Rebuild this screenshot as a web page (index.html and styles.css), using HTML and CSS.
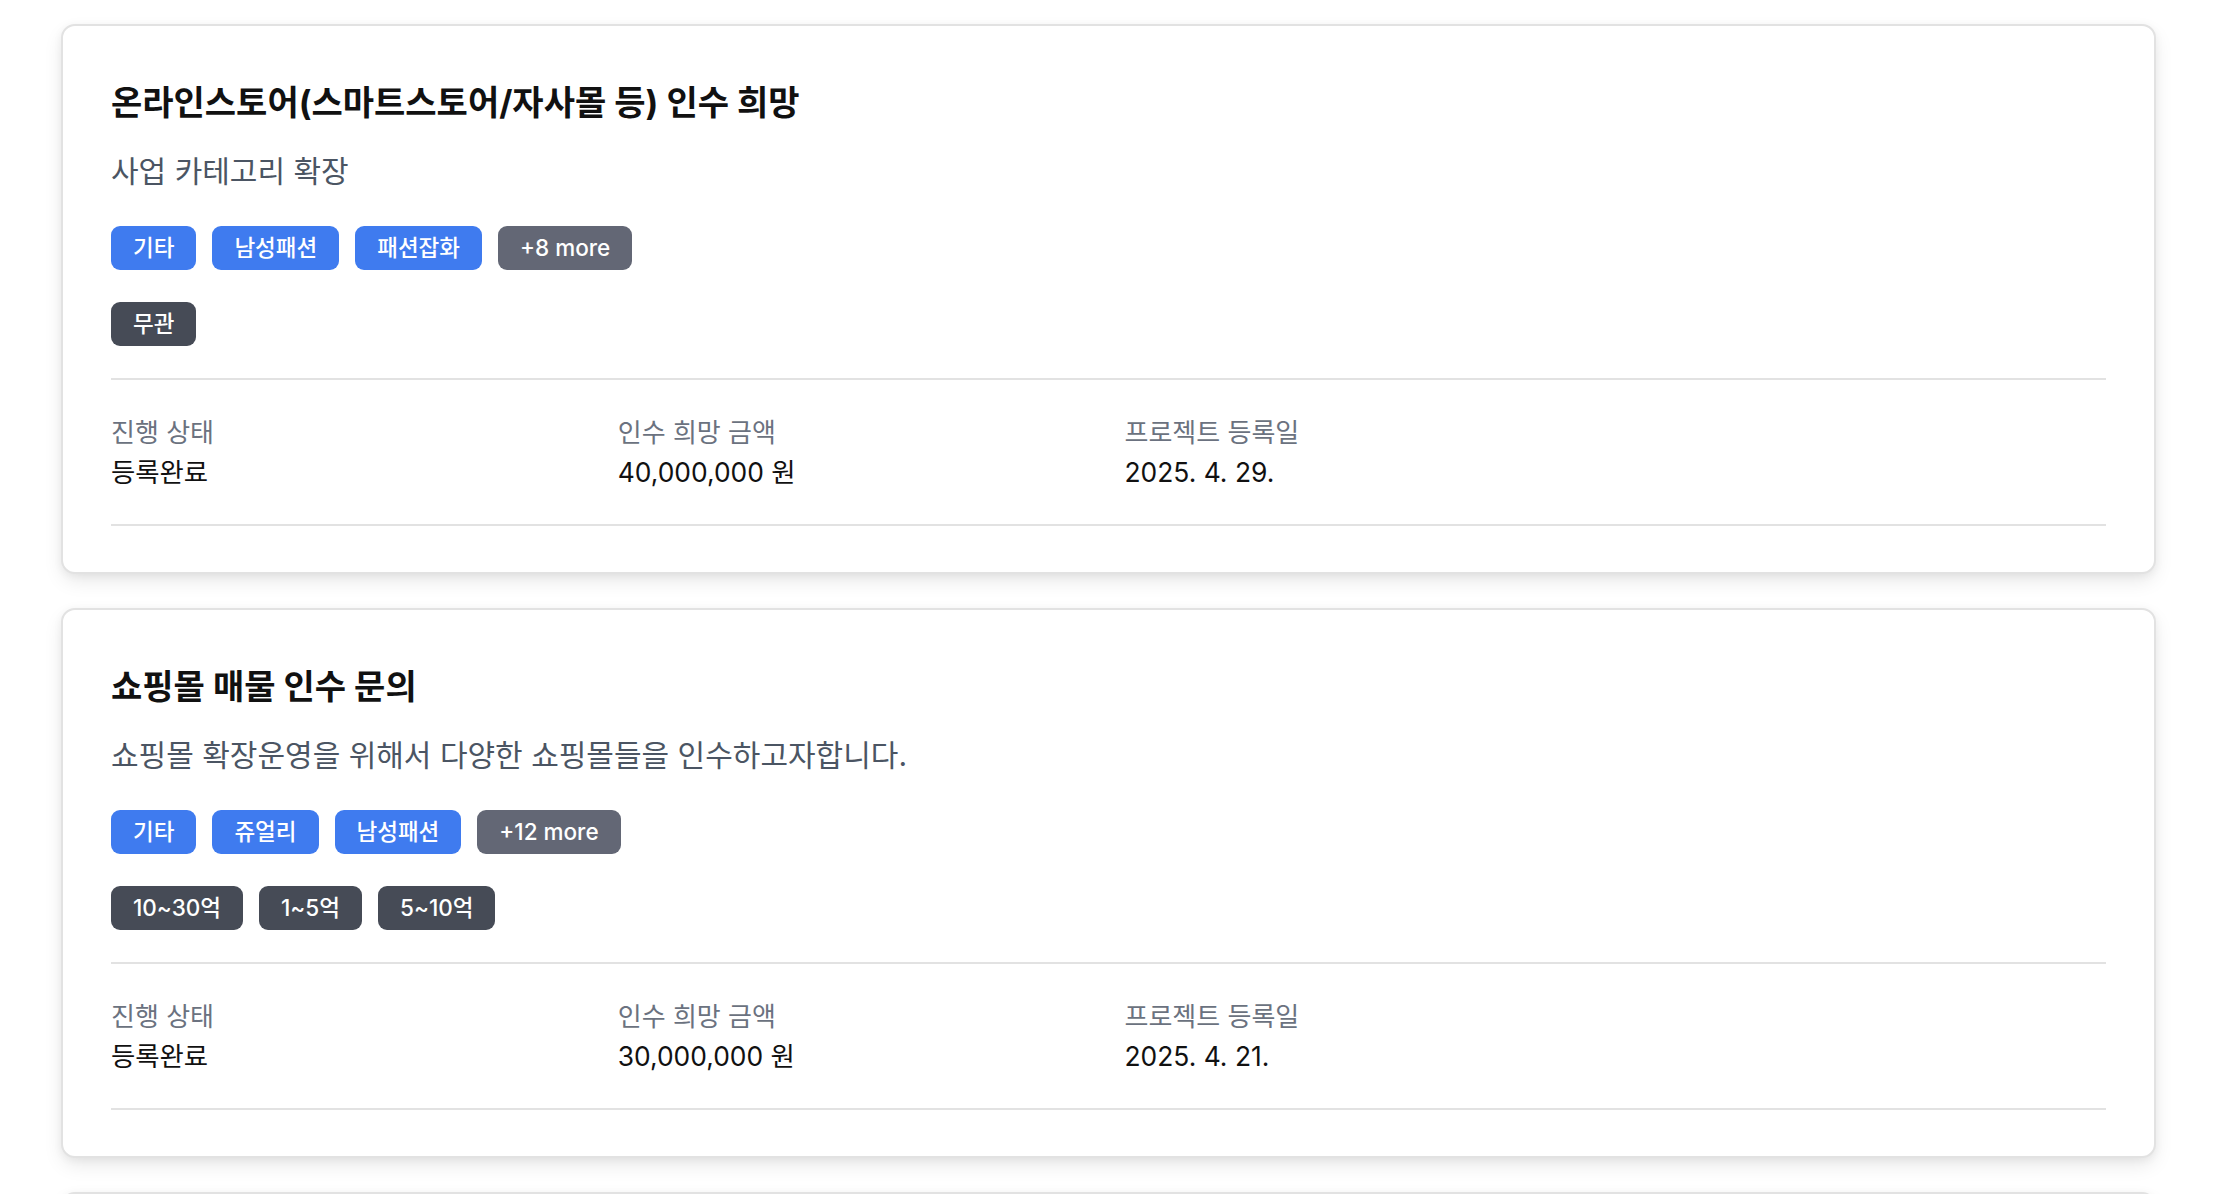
FILE: index.html
```html
<!DOCTYPE html>
<html lang="ko">
<head>
<meta charset="utf-8">
<title>인수 희망 프로젝트</title>
<link rel="stylesheet" href="styles.css">
</head>
<body>
<main class="list">
  <article class="card">
    <h2 class="card-title">온라인스토어(스마트스토어/자사몰 등) 인수 희망</h2>
    <p class="card-desc">사업 카테고리 확장</p>
    <div class="tag-row">
      <span class="tag tag-blue">기타</span>
      <span class="tag tag-blue">남성패션</span>
      <span class="tag tag-blue">패션잡화</span>
      <span class="tag tag-gray">+8 more</span>
    </div>
    <div class="tag-row">
      <span class="tag tag-dark">무관</span>
    </div>
    <div class="details">
      <div class="detail">
        <div class="detail-label">진행 상태</div>
        <div class="detail-value">등록완료</div>
      </div>
      <div class="detail">
        <div class="detail-label">인수 희망 금액</div>
        <div class="detail-value">40,000,000 원</div>
      </div>
      <div class="detail">
        <div class="detail-label">프로젝트 등록일</div>
        <div class="detail-value">2025. 4. 29.</div>
      </div>
    </div>
  </article>

  <article class="card">
    <h2 class="card-title">쇼핑몰 매물 인수 문의</h2>
    <p class="card-desc">쇼핑몰 확장운영을 위해서 다양한 쇼핑몰들을 인수하고자합니다.</p>
    <div class="tag-row">
      <span class="tag tag-blue">기타</span>
      <span class="tag tag-blue">쥬얼리</span>
      <span class="tag tag-blue">남성패션</span>
      <span class="tag tag-gray">+12 more</span>
    </div>
    <div class="tag-row">
      <span class="tag tag-dark">10~30억</span>
      <span class="tag tag-dark">1~5억</span>
      <span class="tag tag-dark">5~10억</span>
    </div>
    <div class="details">
      <div class="detail">
        <div class="detail-label">진행 상태</div>
        <div class="detail-value">등록완료</div>
      </div>
      <div class="detail">
        <div class="detail-label">인수 희망 금액</div>
        <div class="detail-value">30,000,000 원</div>
      </div>
      <div class="detail">
        <div class="detail-label">프로젝트 등록일</div>
        <div class="detail-value">2025. 4. 21.</div>
      </div>
    </div>
  </article>

  <article class="card card-next" aria-hidden="true"></article>
</main>
</body>
</html>
```

FILE: styles.css
```css
* {
  box-sizing: border-box;
}

html, body {
  margin: 0;
  padding: 0;
  background: #ffffff;
}

body {
  font-family: Inter, "Noto Sans CJK KR", "Noto Sans", sans-serif;
  color: #111111;
  overflow: hidden;
}

.list {
  display: flex;
  flex-direction: column;
  gap: 34px;
  width: 2095px;
  margin-left: 61px;
  padding-top: 24px;
}

.card {
  background: #ffffff;
  border: 2px solid #e2e2e2;
  border-radius: 14px;
  padding: 55px 48px 46px;
  box-shadow: 0 8px 20px -2px rgba(0, 0, 0, 0.1), 0 2px 8px rgba(0, 0, 0, 0.05);
}

.card-next {
  min-height: 300px;
}

.card-title {
  margin: 0;
  font-size: 34px;
  line-height: 44px;
  font-weight: 700;
  color: #111111;
}

.card-desc {
  margin: 26px 0 0;
  font-size: 30px;
  line-height: 40px;
  font-weight: 400;
  color: #4b5563;
}

.tag-row {
  display: flex;
  gap: 16px;
  margin-top: 32px;
}

.card-desc + .tag-row {
  margin-top: 35px;
}

.tag {
  display: inline-block;
  height: 44px;
  line-height: 44px;
  padding: 0 22px;
  border-radius: 9px;
  font-size: 22.5px;
  font-weight: 500;
  color: #ffffff;
  white-space: nowrap;
}

.tag-blue {
  background: #3f7bef;
}

.tag-gray {
  background: #636775;
}

.tag-dark {
  background: #464b56;
}

.details {
  display: grid;
  grid-template-columns: repeat(4, 1fr);
  column-gap: 32px;
  margin-top: 32px;
  padding: 37px 0 36px;
  border-top: 2px solid #e2e2e2;
  border-bottom: 2px solid #e2e2e2;
}

.detail-label {
  font-size: 26px;
  line-height: 32px;
  color: #6b7280;
}

.detail-value {
  margin-top: 7px;
  font-size: 26.4px;
  line-height: 32px;
  color: #111111;
}
```
